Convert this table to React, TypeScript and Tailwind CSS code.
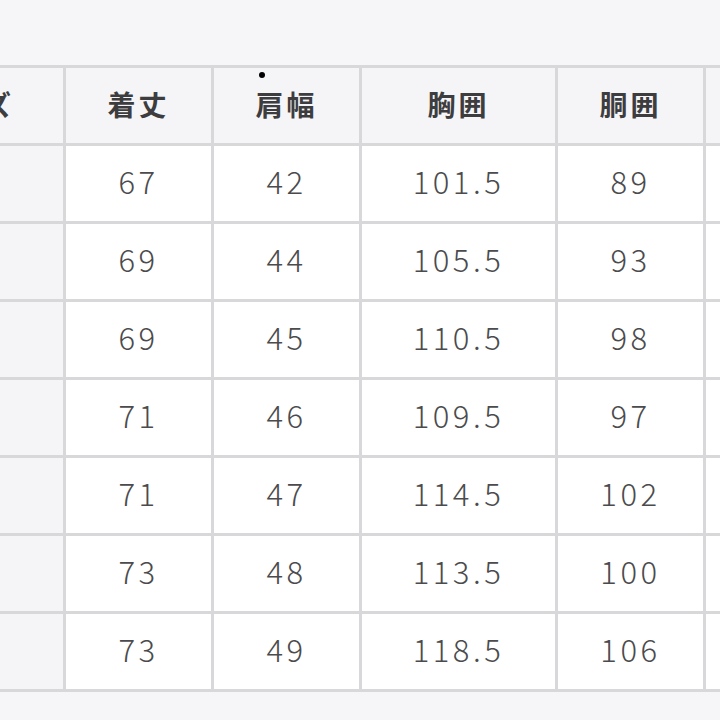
import React from "react";

const headers = ["サイズ", "着丈", "肩幅", "胸囲", "胴囲", "裾幅"];

const rows = [
  ["S", "67", "42", "101.5", "89", "50"],
  ["M", "69", "44", "105.5", "93", "52"],
  ["L", "69", "45", "110.5", "98", "54"],
  ["XL", "71", "46", "109.5", "97", "55"],
  ["2XL", "71", "47", "114.5", "102", "57"],
  ["3XL", "73", "48", "113.5", "100", "58"],
  ["4XL", "73", "49", "118.5", "106", "60"],
];

const font = {
  fontFamily: '"Noto Sans CJK JP", "Noto Sans", sans-serif',
};

export default function App() {
  return (
    <div
      className="relative h-[720px] w-[720px] overflow-hidden bg-[#f6f6f8] pt-[65px]"
      style={font}
    >
      <div className="ml-[-140px] grid w-max grid-cols-[200px_145px_145px_193px_145px_145px] gap-[3px] bg-[#d8d8da] p-[3px]">
        {headers.map((h, i) => (
          <div
            key={h}
            className={
              "flex h-[75px] items-center whitespace-nowrap bg-[#f5f5f7] pb-[4px] text-[28px] font-bold tracking-[3px] text-[#3d3d3f] " +
              (i === 0 ? "justify-end pr-[49px]" : "justify-center")
            }
          >
            {h}
          </div>
        ))}
        {rows.map((r) =>
          r.map((v, i) => (
            <div
              key={r[0] + i}
              className={
                "flex h-[75px] items-center whitespace-nowrap pb-[4px] text-[31px] font-light tracking-[3.5px] text-[#4b4b4d] " +
                (i === 0 ? "justify-end bg-[#f5f5f7] pr-[62px]" : "justify-center bg-white")
              }
            >
              {v}
            </div>
          ))
        )}
      </div>
      <div className="absolute left-[259px] top-[72px] h-[6px] w-[6px] rounded-full bg-black" />
    </div>
  );
}
